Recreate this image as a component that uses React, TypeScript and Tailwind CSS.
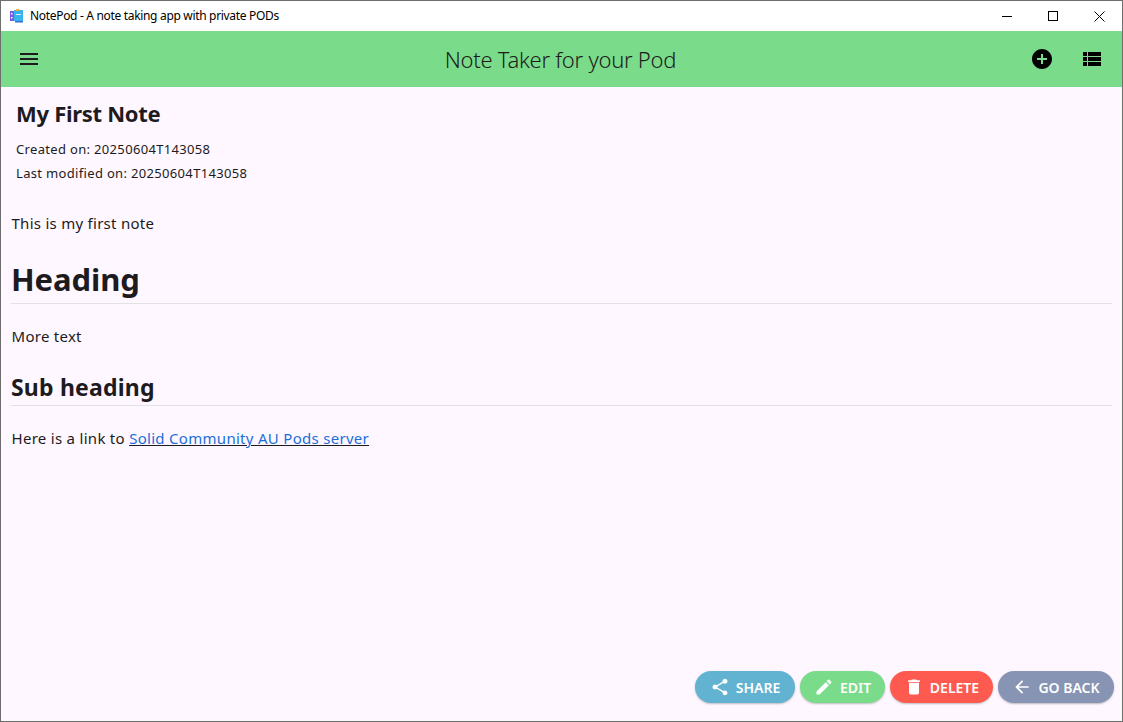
const paths = {
  menu: "M3 18h18v-2H3v2zm0-5h18v-2H3v2zm0-7v2h18V6H3z",
  add: "M12 2C6.48 2 2 6.48 2 12s4.48 10 10 10 10-4.48 10-10S17.52 2 12 2zm5 11h-4v4h-2v-4H7v-2h4V7h2v4h4v2z",
  list: "M3 14h4v-4H3v4zm0 5h4v-4H3v4zM3 9h4V5H3v4zm5 5h13v-4H8v4zm0 5h13v-4H8v4zM8 5v4h13V5H8z",
  share:
    "M18 16.08c-.76 0-1.44.3-1.96.77L8.91 12.7c.05-.23.09-.46.09-.7s-.04-.47-.09-.7l7.05-4.11c.54.5 1.25.81 2.04.81 1.66 0 3-1.34 3-3s-1.34-3-3-3-3 1.34-3 3c0 .24.04.47.09.7L8.04 9.81C7.5 9.31 6.79 9 6 9c-1.66 0-3 1.34-3 3s1.34 3 3 3c.79 0 1.5-.31 2.04-.81l7.12 4.16c-.05.21-.08.43-.08.65 0 1.61 1.31 2.92 2.92 2.92s2.92-1.31 2.92-2.92-1.31-2.92-2.92-2.92z",
  edit: "M3 17.25V21h3.75L17.81 9.94l-3.75-3.75L3 17.25zM20.71 7.04c.39-.39.39-1.02 0-1.41l-2.34-2.34c-.39-.39-1.02-.39-1.41 0l-1.83 1.83 3.75 3.75 1.83-1.83z",
  trash: "M6 19c0 1.1.9 2 2 2h8c1.1 0 2-.9 2-2V7H6v12zM19 4h-3.5l-1-1h-5l-1 1H5v2h14V4z",
  back: "M20 11H7.83l5.59-5.59L12 4l-8 8 8 8 1.41-1.41L7.83 13H20v-2z",
};

function Icon({ d, className }: { d: string; className: string }) {
  return (
    <svg className={className} viewBox="0 0 24 24" fill="currentColor">
      <path d={d} />
    </svg>
  );
}

interface ActionProps {
  icon: string;
  label: string;
  className: string;
}

function ActionButton({ icon, label, className }: ActionProps) {
  return (
    <button
      className={`h-8 rounded-full flex items-center justify-center gap-[6px] text-white text-[14px] font-semibold shadow-[0_1px_2px_rgba(0,0,0,0.25)] ${className}`}
    >
      <Icon d={icon} className="w-5 h-5" />
      {label}
    </button>
  );
}

export default function App() {
  return (
    <div className="w-[1123px] h-[722px] flex flex-col overflow-hidden border border-[#6e6e6e] bg-[#fef7ff] text-[#1d1b20] font-['Noto_Sans','Open_Sans',sans-serif]">
      {/* Window title bar */}
      <div className="h-[30px] shrink-0 bg-white flex items-center text-black">
        <svg className="w-[14px] h-[14px] ml-[9px] mr-[6px]" viewBox="0 0 14 14">
          <rect x="0" y="2" width="5" height="10" fill="#7b5be6" />
          <rect x="1" y="4" width="1.5" height="1.5" fill="#ffffff" />
          <rect x="1" y="8" width="1.5" height="1.5" fill="#ffffff" />
          <rect x="4" y="1" width="9" height="11" fill="#36b4f0" />
          <rect x="6" y="0" width="3" height="2" fill="#f0b040" />
          <rect x="6" y="5" width="5" height="1" fill="#d8f0ff" />
          <rect x="5" y="12" width="8" height="1.5" fill="#2f6fd0" />
        </svg>
        <span className="text-[12px] tracking-[-0.32px]">NotePod - A note taking app with private PODs</span>
        <div className="ml-auto flex items-center h-full">
          <div className="w-[46px] flex justify-center">
            <svg className="w-[10px] h-[10px]" viewBox="0 0 10 10" stroke="black" fill="none">
              <path d="M0 5.5h10" />
            </svg>
          </div>
          <div className="w-[46px] flex justify-center">
            <svg className="w-[10px] h-[10px]" viewBox="0 0 10 10" stroke="black" fill="none">
              <rect x="0.5" y="0.5" width="9" height="9" />
            </svg>
          </div>
          <div className="w-[46px] flex justify-center">
            <svg className="w-[11px] h-[11px]" viewBox="0 0 11 11" stroke="black" fill="none">
              <path d="M0.5 0.5l10 10M10.5 0.5l-10 10" />
            </svg>
          </div>
        </div>
      </div>

      {/* App bar */}
      <div className="h-[56px] shrink-0 bg-[#7adc8a] grid grid-cols-[1fr_auto_1fr] items-center pl-4 pr-[18px]">
        <Icon d={paths.menu} className="w-6 h-6" />
        <div className="text-[22px] font-light tracking-[-0.27px]">Note Taker for your Pod</div>
        <div className="flex justify-end gap-[26px]">
          <Icon d={paths.add} className="w-6 h-6 text-black" />
          <Icon d={paths.list} className="w-6 h-6 text-black" />
        </div>
      </div>

      {/* Note */}
      <div className="flex-1 flex flex-col min-h-0 px-[10px] pb-[18px]">
        <div className="pl-[5px] pt-[9px]">
          <h1 className="text-[22px] font-bold leading-[34px] tracking-[-0.3px]">My First Note</h1>
          <p className="text-[13px] leading-[24px] mt-[7px] tracking-[0.33px]">Created on: 20250604T143058</p>
          <p className="text-[13px] leading-[24px] tracking-[0.33px]">Last modified on: 20250604T143058</p>
        </div>
        <p className="text-[15px] leading-[22px] mt-[27px] pl-[0.5px] tracking-[0.27px]">This is my first note</p>
        <h2 className="text-[31px] font-bold leading-[44px] mt-[23px] pb-[2px] border-b border-[#e3e1e8] tracking-[-0.1px]">Heading</h2>
        <p className="text-[15px] leading-[22px] mt-[21px] pl-[0.5px] tracking-[0.27px]">More text</p>
        <h3 className="text-[23px] font-bold leading-[32px] mt-[24px] pb-[2px] border-b border-[#e3e1e8] tracking-[0.2px]">Sub heading</h3>
        <p className="text-[15px] leading-[22px] mt-[21px] pl-[0.5px] tracking-[0.29px]">
          Here is a link to{" "}
          <a className="text-[#1a6fd8] underline decoration-[#1d1b20]">Solid Community AU Pods server</a>
        </p>

        <div className="mt-auto flex justify-end gap-[5px] -mr-[2px]">
          <ActionButton icon={paths.share} label="SHARE" className="w-[100px] bg-[#62b2d2]" />
          <ActionButton icon={paths.edit} label="EDIT" className="w-[85px] bg-[#7adc8a]" />
          <ActionButton icon={paths.trash} label="DELETE" className="w-[103px] bg-[#ff5a50]" />
          <ActionButton icon={paths.back} label="GO BACK" className="w-[116px] bg-[#8794b4]" />
        </div>
      </div>
    </div>
  );
}
